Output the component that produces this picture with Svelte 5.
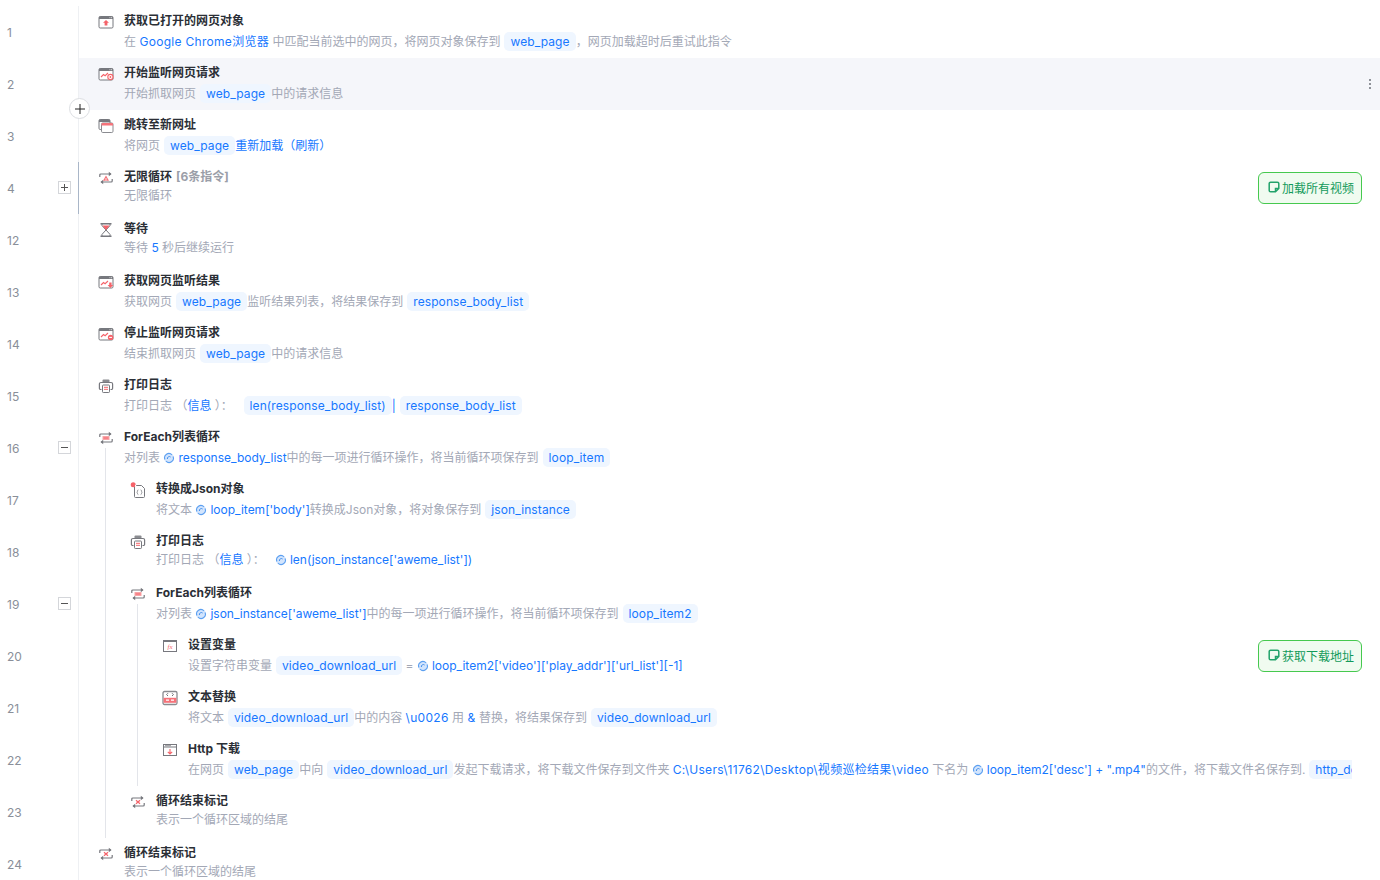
<script>
	// parts: t = grey text, b = blue text, w = blue text set a bit looser, p = variable pill, v = expression with the swirl mark
	const webPage = ['p', 'web_page'];
	const rows = [
		{ n: 1, icon: 'open', depth: 0, title: '获取已打开的网页对象', parts: [['t', '在 '], ['w', 'Google Chrome浏览器'], ['t', ' 中匹配当前选中的网页，将网页对象保存到'], webPage, ['t', '，网页加载超时后重试此指令']] },
		{ n: 2, icon: 'listen', depth: 0, title: '开始监听网页请求', hover: true, parts: [['t', '开始抓取网页'], webPage, ['t', '中的请求信息']] },
		{ n: 3, icon: 'goto', depth: 0, title: '跳转至新网址', parts: [['t', '将网页'], webPage, ['b', '重新加载（刷新）']] },
		{ n: 4, icon: 'forever', depth: 0, title: '无限循环', count: '[6条指令]', toggle: 'closed', mark: '加载所有视频', parts: [['t', '无限循环']] },
		{ n: 12, icon: 'wait', depth: 0, title: '等待', parts: [['t', '等待 '], ['b', '5'], ['t', ' 秒后继续运行']] },
		{ n: 13, icon: 'result', depth: 0, title: '获取网页监听结果', parts: [['t', '获取网页'], webPage, ['t', '监听结果列表，将结果保存到'], ['p', 'response_body_list']] },
		{ n: 14, icon: 'stop', depth: 0, title: '停止监听网页请求', parts: [['t', '结束抓取网页'], webPage, ['t', '中的请求信息']] },
		{ n: 15, icon: 'print', depth: 0, title: '打印日志', parts: [['t', '打印日志 （'], ['b', '信息'], ['t', ' ）：  '], ['p', 'len(response_body_list)'], ['b', '|'], ['p', 'response_body_list']] },
		{ n: 16, icon: 'foreach', depth: 0, title: 'ForEach列表循环', toggle: 'open', parts: [['t', '对列表 '], ['v', 'response_body_list'], ['t', '中的每一项进行循环操作，将当前循环项保存到'], ['p', 'loop_item']] },
		{ n: 17, icon: 'json', depth: 1, title: '转换成Json对象', parts: [['t', '将文本 '], ['v', "loop_item['body']"], ['t', '转换成Json对象，将对象保存到'], ['p', 'json_instance']] },
		{ n: 18, icon: 'print', depth: 1, title: '打印日志', parts: [['t', '打印日志 （'], ['b', '信息'], ['t', ' ）：   '], ['v', "len(json_instance['aweme_list'])"]] },
		{ n: 19, icon: 'foreach', depth: 1, title: 'ForEach列表循环', toggle: 'open', parts: [['t', '对列表 '], ['v', "json_instance['aweme_list']"], ['t', '中的每一项进行循环操作，将当前循环项保存到'], ['p', 'loop_item2']] },
		{ n: 20, icon: 'setvar', depth: 2, title: '设置变量', mark: '获取下载地址', parts: [['t', '设置字符串变量'], ['p', 'video_download_url'], ['t', ' = '], ['v', "loop_item2['video']['play_addr']['url_list'][-1]"]] },
		{ n: 21, icon: 'replace', depth: 2, title: '文本替换', parts: [['t', '将文本'], ['p', 'video_download_url'], ['t', '中的内容 '], ['w', '\\u0026'], ['t', ' 用 '], ['w', '&'], ['t', ' 替换，将结果保存到'], ['p', 'video_download_url']] },
		{ n: 22, icon: 'download', depth: 2, title: 'Http 下载', parts: [['t', '在网页'], webPage, ['t', '中向'], ['p', 'video_download_url'], ['t', '发起下载请求，将下载文件保存到文件夹 '], ['w', 'C:\\Users\\11762\\Desktop\\视频巡检结果\\video'], ['t', ' 下名为 '], ['v', "loop_item2['desc'] + \".mp4\""], ['t', '的文件，将下载文件名保存到.'], ['p', 'http_download_path']] },
		{ n: 23, icon: 'endloop', depth: 1, title: '循环结束标记', parts: [['t', '表示一个循环区域的结尾']] },
		{ n: 24, icon: 'endloop', depth: 0, title: '循环结束标记', parts: [['t', '表示一个循环区域的结尾']] }
	];
</script>

{#snippet windowFrame()}
	<rect x="1" y="2.5" width="14" height="11.5" rx="1.2" fill="#fff" stroke="#77787e" />
	<path d="M1 3.5a1 1 0 0 1 1-1h12a1 1 0 0 1 1 1V5H1z" fill="#77787e" />
	<path d="M11.5 3.7h.9M13 3.7h.9" stroke="#fff" stroke-width=".8" />
{/snippet}

{#snippet trend()}
	<path d="M3 11l2.5-2.5 1.6 1.2L10 7" fill="none" stroke="#f5636a" stroke-width="1.1" />
{/snippet}

{#snippet loopArrows()}
	<path d="M1.8 7V5a1 1 0 0 1 1-1H13M14.2 9v2a1 1 0 0 1-1 1H3" fill="none" stroke="#77787e" stroke-width="1.2" />
	<path d="M10.8 1.7L13.6 4l-2.8 2.3zM5.2 9.7L2.4 12l2.8 2.3z" fill="#77787e" />
{/snippet}

{#snippet icon(name)}
	<svg class="step-icon" viewBox="0 0 16 16" width="16" height="16" aria-hidden="true">
		{#if name === 'open'}
			{@render windowFrame()}
			<path d="M8 6l3 2.8H9.4v2.6H6.6V8.8H5z" fill="#f5636a" />
		{:else if name === 'listen'}
			{@render windowFrame()}
			{@render trend()}
			<circle cx="12.4" cy="11" r="2.6" fill="#fff" stroke="#f5636a" stroke-width="1.1" />
			<circle cx="12.4" cy="11" r=".9" fill="#f5636a" />
		{:else if name === 'goto'}
			<rect x="1" y="1.5" width="11" height="10" rx="1.2" fill="#fff" stroke="#77787e" />
			<path d="M1 2.5a1 1 0 0 1 1-1h9a1 1 0 0 1 1 1V4H1z" fill="#77787e" />
			<rect x="3.5" y="5" width="11.5" height="9.5" rx="1.2" fill="#fff" stroke="#8a8b90" />
			<path d="M3.5 6a1 1 0 0 1 1-1H14a1 1 0 0 1 1 1v1.6H3.5z" fill="#f5737a" />
		{:else if name === 'forever'}
			{@render loopArrows()}
			<path d="M8 5.5l3 5.2H5z" fill="#f5737a" />
			<path d="M8 8v2.7" stroke="#fff" stroke-width=".8" />
		{:else if name === 'foreach'}
			{@render loopArrows()}
			<rect x="4.5" y="6" width="7" height="4" fill="#f8a5a8" />
			<path d="M5.5 8h5" stroke="#f5636a" />
		{:else if name === 'endloop'}
			{@render loopArrows()}
			<path d="M6 6.2l4 3.6M10 6.2L6 9.8" stroke="#f5636a" stroke-width="1.2" />
		{:else if name === 'wait'}
			<path d="M2.5 1.8h11M2.5 14.2h11" stroke="#77787e" stroke-width="1.4" />
			<path d="M4 2v1.6L12 12.4V14M12 2v1.6L4 12.4V14" fill="none" stroke="#77787e" stroke-width="1" />
			<path d="M4.4 3.6h7.2L8 8z" fill="#f5636a" />
		{:else if name === 'result'}
			{@render windowFrame()}
			{@render trend()}
			<path d="M11.2 8.5h2.4v2.6h1.6l-2.8 3-2.8-3h1.6z" fill="#f5636a" />
		{:else if name === 'stop'}
			{@render windowFrame()}
			{@render trend()}
			<circle cx="12.6" cy="11.4" r="2.7" fill="#f5636a" />
			<path d="M11.2 11.4h2.8" stroke="#fff" />
		{:else if name === 'print'}
			<path d="M4.5 4.5V2.4a1 1 0 0 1 1-1h5a1 1 0 0 1 1 1v2.1z" fill="#8a8b90" />
			<path d="M3.5 11.5H2.6a1.2 1.2 0 0 1-1.2-1.2V6a1.5 1.5 0 0 1 1.5-1.5h10.2A1.5 1.5 0 0 1 14.6 6v4.3a1.2 1.2 0 0 1-1.2 1.2h-.9" fill="#fff" stroke="#77787e" stroke-width="1.2" />
			<rect x="4.5" y="7" width="7" height="7.5" rx=".8" fill="#fff" stroke="#77787e" />
			<path d="M6 9.3h4M6 11.3h4" stroke="#f5636a" />
		{:else if name === 'json'}
			<path d="M4.5 4.5a1 1 0 0 1 1-1h6l3 3v8a1 1 0 0 1-1 1h-8a1 1 0 0 1-1-1z" fill="#fff" stroke="#77787e" />
			<path d="M8.3 7.8c-1 0-.6 2-1.4 2.4.8.4.4 2.4 1.4 2.4M10.7 7.8c1 0 .6 2 1.4 2.4-.8.4-.4 2.4-1.4 2.4" fill="none" stroke="#77787e" stroke-width=".8" />
			<circle cx="3.2" cy="2.8" r="2.5" fill="#f5636a" />
			<path d="M5 2.5a2 2 0 0 1 1.5 2L5 4.5z" fill="#fff" />
		{:else if name === 'setvar'}
			<rect x="1.5" y="2.5" width="13" height="11" fill="#fff" stroke="#77787e" />
			<path d="M1.5 3.5h13" stroke="#77787e" />
			<text x="8" y="11" class="fx">fx</text>
		{:else if name === 'replace'}
			<rect x="1" y="1.5" width="14" height="13" rx="1.5" fill="#fff" stroke="#8a8b90" stroke-width="1.3" />
			<path d="M6 3.2L4.6 4.6 6 6M10 3.2l1.4 1.4L10 6" fill="none" stroke="#6e6f75" />
			<rect x="1.6" y="7.8" width="12.8" height="5" fill="#f5737a" />
			<path d="M4 10.2h3M9 10.2h3" stroke="#fff" stroke-width="1.2" />
		{:else if name === 'download'}
			<rect x="1.5" y="2.5" width="13" height="11" fill="#fff" stroke="#77787e" />
			<path d="M1.5 5h13" stroke="#77787e" />
			<path d="M3 3.7h6" stroke="#77787e" stroke-width=".8" />
			<path d="M8 7v5M5.8 9.8L8 12l2.2-2.2" fill="none" stroke="#f5636a" stroke-width="1.1" />
		{/if}
	</svg>
{/snippet}

{#snippet swirl()}
	<svg class="swirl" viewBox="0 0 12 12" width="12" height="12" aria-hidden="true">
		<circle cx="6" cy="6" r="5" fill="#d3e5fd" />
		<path d="M2 7.5A4.2 4.2 0 0 1 9 3M10 4.5A4.2 4.2 0 0 1 3 9" fill="none" stroke="#5b9ff0" stroke-width="1.1" />
		<path d="M4.4 7A2 2 0 0 1 7.6 5" fill="none" stroke="#3f8deb" />
	</svg>
{/snippet}

<div class="flow">
	{#each rows as row (row.n)}
		<div class="row" class:hover={row.hover} class:collapsed={row.toggle === 'closed'}>
			<div class="gutter">
				<span class="num">{row.n}</span>
				{#if row.toggle}
					<span class="toggle" class:closed={row.toggle === 'closed'}></span>
				{/if}
			</div>
			<div class="body">
				{#each { length: row.depth } as _, i}
					<span class="guide" style="left: {26 + i * 32}px"></span>
				{/each}
				{#if row.toggle === 'open'}
					<span class="guide from-icon" style="left: {26 + row.depth * 32}px"></span>
				{/if}
				<div class="step" style="margin-left: {row.depth * 32}px">
					{@render icon(row.icon)}
					<div class="text">
						<div class="title">{row.title}{#if row.count}<span class="count">{row.count}</span>{/if}</div>
						<div class="desc">{#each row.parts as [kind, value]}{#if kind === 't'}<span>{value}</span>{:else if kind === 'b'}<span class="blue">{value}</span>{:else if kind === 'w'}<span class="blue wide">{value}</span>{:else if kind === 'p'}<span class="pill">{value}</span>{:else}<span class="blue">{@render swirl()}{value}</span>{/if}{/each}</div>
					</div>
				</div>
			</div>
			{#if row.mark}
				<button class="mark">
					<svg viewBox="0 0 12 12" width="12" height="12" aria-hidden="true">
						<path d="M7.5 10.8H2.6a1.4 1.4 0 0 1-1.4-1.4V2.6a1.4 1.4 0 0 1 1.4-1.4h6.8a1.4 1.4 0 0 1 1.4 1.4v4.9zM7.5 10.8V7.5h3.3" fill="none" stroke="#22a36b" stroke-width="1.5" />
					</svg>
					{row.mark}
				</button>
			{/if}
			{#if row.hover}
				<span class="dots"><i></i><i></i><i></i></span>
				<span class="add">
					<svg viewBox="0 0 10 10" width="10" height="10" aria-hidden="true"><path d="M5 0v10M0 5h10" stroke="#222" /></svg>
				</span>
			{/if}
		</div>
	{/each}
</div>

<style>
	:global(body) {
		background: #fff;
		overflow: hidden;
	}

	.flow {
		height: 874px;
		padding-top: 6px;
		overflow: hidden;
		font-family: Inter, 'Noto Sans CJK SC', sans-serif;
		font-size: 12px;
	}

	.row {
		position: relative;
		display: flex;
		height: 52px;
	}

	.row.hover {
		background: linear-gradient(to right, #fff 79px, #f5f6fa 79px);
	}

	.gutter {
		flex: none;
		width: 64px;
		height: 100%;
		border-right: 1px solid #eef0f3;
		display: flex;
		align-items: center;
		justify-content: space-between;
		padding: 0 7px;
	}

	.collapsed .gutter {
		border-right-color: #a9b6c8;
	}

	.num {
		color: #8a8f99;
	}

	.toggle {
		position: relative;
		box-sizing: border-box;
		width: 13px;
		height: 13px;
		margin-top: -1px;
		border: 1px solid #d4d6da;
	}

	.toggle::before,
	.toggle.closed::after {
		content: '';
		position: absolute;
		background: #555;
	}

	.toggle::before {
		left: 2px;
		right: 2px;
		top: 5px;
		height: 1px;
	}

	.toggle.closed::after {
		top: 2px;
		bottom: 2px;
		left: 5px;
		width: 1px;
	}

	.body {
		position: relative;
		flex: 1;
		min-width: 0;
		padding: 0 28px 0 19px;
	}

	.guide {
		position: absolute;
		top: 0;
		bottom: 0;
		width: 1px;
		background: #e3e5ea;
	}

	.guide.from-icon {
		top: 26px;
	}

	.step {
		display: flex;
		gap: 10px;
	}

	.step-icon {
		flex: none;
		margin-top: 8px;
	}

	.fx {
		font-family: 'Liberation Serif', serif;
		font-style: italic;
		font-size: 7px;
		text-anchor: middle;
		fill: #f5636a;
	}

	.text {
		flex: 1;
		min-width: 0;
		padding-top: 7px;
	}

	.title {
		height: 16px;
		line-height: 16px;
		font-weight: 700;
		color: #2b2f36;
	}

	.count {
		margin-left: 4px;
		color: #9a9ea8;
	}

	/* lines with a pill sit 2px lower than plain ones */
	.desc {
		margin-top: 3px;
		line-height: 16px;
		color: #a3a8b6;
		white-space: pre;
		overflow: hidden;
	}

	.blue {
		color: #1677ff;
	}

	.wide {
		letter-spacing: 0.3px;
	}

	.pill {
		display: inline-block;
		line-height: 19px;
		margin: 0 0 0 4px;
		padding: 0 6px;
		border-radius: 5px;
		background: #eff6ff;
		color: #1677ff;
		letter-spacing: 0.1px;
	}

	.swirl {
		margin-right: 3px;
		vertical-align: -2px;
	}

	.mark {
		position: absolute;
		top: 10px;
		right: 18px;
		display: flex;
		align-items: center;
		gap: 2px;
		width: 104px;
		height: 32px;
		padding: 0 0 2px 9px;
		border: 1px solid #46c94f;
		border-radius: 6px;
		background: #f0fbf0;
		color: #129a5a;
		font: inherit;
	}

	.dots {
		position: absolute;
		top: 21px;
		right: 9px;
		display: flex;
		flex-direction: column;
		gap: 2px;
	}

	.dots i {
		width: 2px;
		height: 2px;
		background: #8f9299;
	}

	.add {
		position: absolute;
		left: 69px;
		bottom: -9px;
		z-index: 1;
		display: flex;
		align-items: center;
		justify-content: center;
		width: 19px;
		height: 19px;
		border: 1px solid #dcdee2;
		border-radius: 50%;
		background: #fff;
	}
</style>
